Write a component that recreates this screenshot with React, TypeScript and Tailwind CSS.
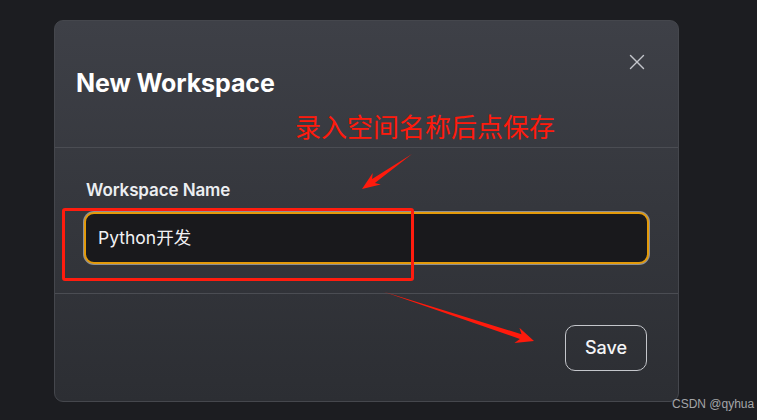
import { X } from 'lucide-react'

const ui = { fontFamily: 'Inter, "Noto Sans CJK SC", sans-serif' }
const cjk = { fontFamily: '"Noto Sans CJK SC", "Noto Sans", sans-serif' }

function Arrows() {
  return (
    <svg className="absolute inset-0 pointer-events-none" width={757} height={420} viewBox="0 0 757 420">
      <polygon
        fill="#ff1a0c"
        points="412,154 374.9,183 380.7,184.4 362,189 372.7,173 372.1,179"
      />
      <polygon
        fill="#ff1a0c"
        points="383,291.5 521.5,334.2 519.4,327.8 534,341 514.4,343 519.9,339"
      />
    </svg>
  )
}

export default function App() {
  return (
    <div className="relative w-[757px] h-[420px] overflow-hidden bg-[#1c1d21] pt-[20px] pl-[54px]" style={ui}>
      <div className="w-[625px] h-[382px] flex flex-col rounded-[9px] border border-[#45474d] bg-gradient-to-b from-[#3e4047] to-[#2c2e33]">
        {/* header */}
        <div className="h-[126px] flex justify-between items-start pl-[21px] pr-[28px]">
          <h2 className="mt-[46px] text-[25px] leading-[32px] font-bold tracking-[-0.1px] text-white">New Workspace</h2>
          <button className="mt-[28px] text-[#c3c5cb]">
            <X size={26} strokeWidth={1.3} />
          </button>
        </div>

        {/* body */}
        <div className="border-y border-[#4b4d53] px-[29px] pt-[30px] pb-[29px]">
          <label className="block pl-[2px] text-[17px] leading-[24px] font-semibold tracking-[-0.1px] text-[#eceef1]">Workspace Name</label>
          <div className="mt-[10px] h-[52px] flex items-center rounded-[10px] border-2 border-[#e39a0a] bg-[#19191c] pl-[12px] shadow-[0_0_0_1px_rgba(255,255,255,0.45)]">
            <span className="text-[17.5px] text-[#f1f1f3]">Python开发</span>
          </div>
        </div>

        {/* footer */}
        <div className="flex-1 flex items-center justify-end pr-[31px]">
          <button className="w-[82px] h-[46px] rounded-[10px] border border-[#c4c6cb] text-[18px] font-medium text-[#f4f4f6]">
            Save
          </button>
        </div>
      </div>

      {/* annotations */}
      <div className="absolute left-[295px] top-[110px] text-[26px] leading-[32px] text-[#ff1a0c]" style={cjk}>
        录入空间名称后点保存
      </div>
      <div className="absolute left-[62px] top-[208px] w-[352px] h-[73px] rounded-[3px] border-[3px] border-[#ff1c0e]" />
      <Arrows />
      <div className="absolute left-[672px] top-[396px] text-[12px] leading-[16px] text-[#a4a5a8]" style={{ fontFamily: '"Liberation Sans", Arial, sans-serif' }}>
        CSDN @qyhua
      </div>
    </div>
  )
}
